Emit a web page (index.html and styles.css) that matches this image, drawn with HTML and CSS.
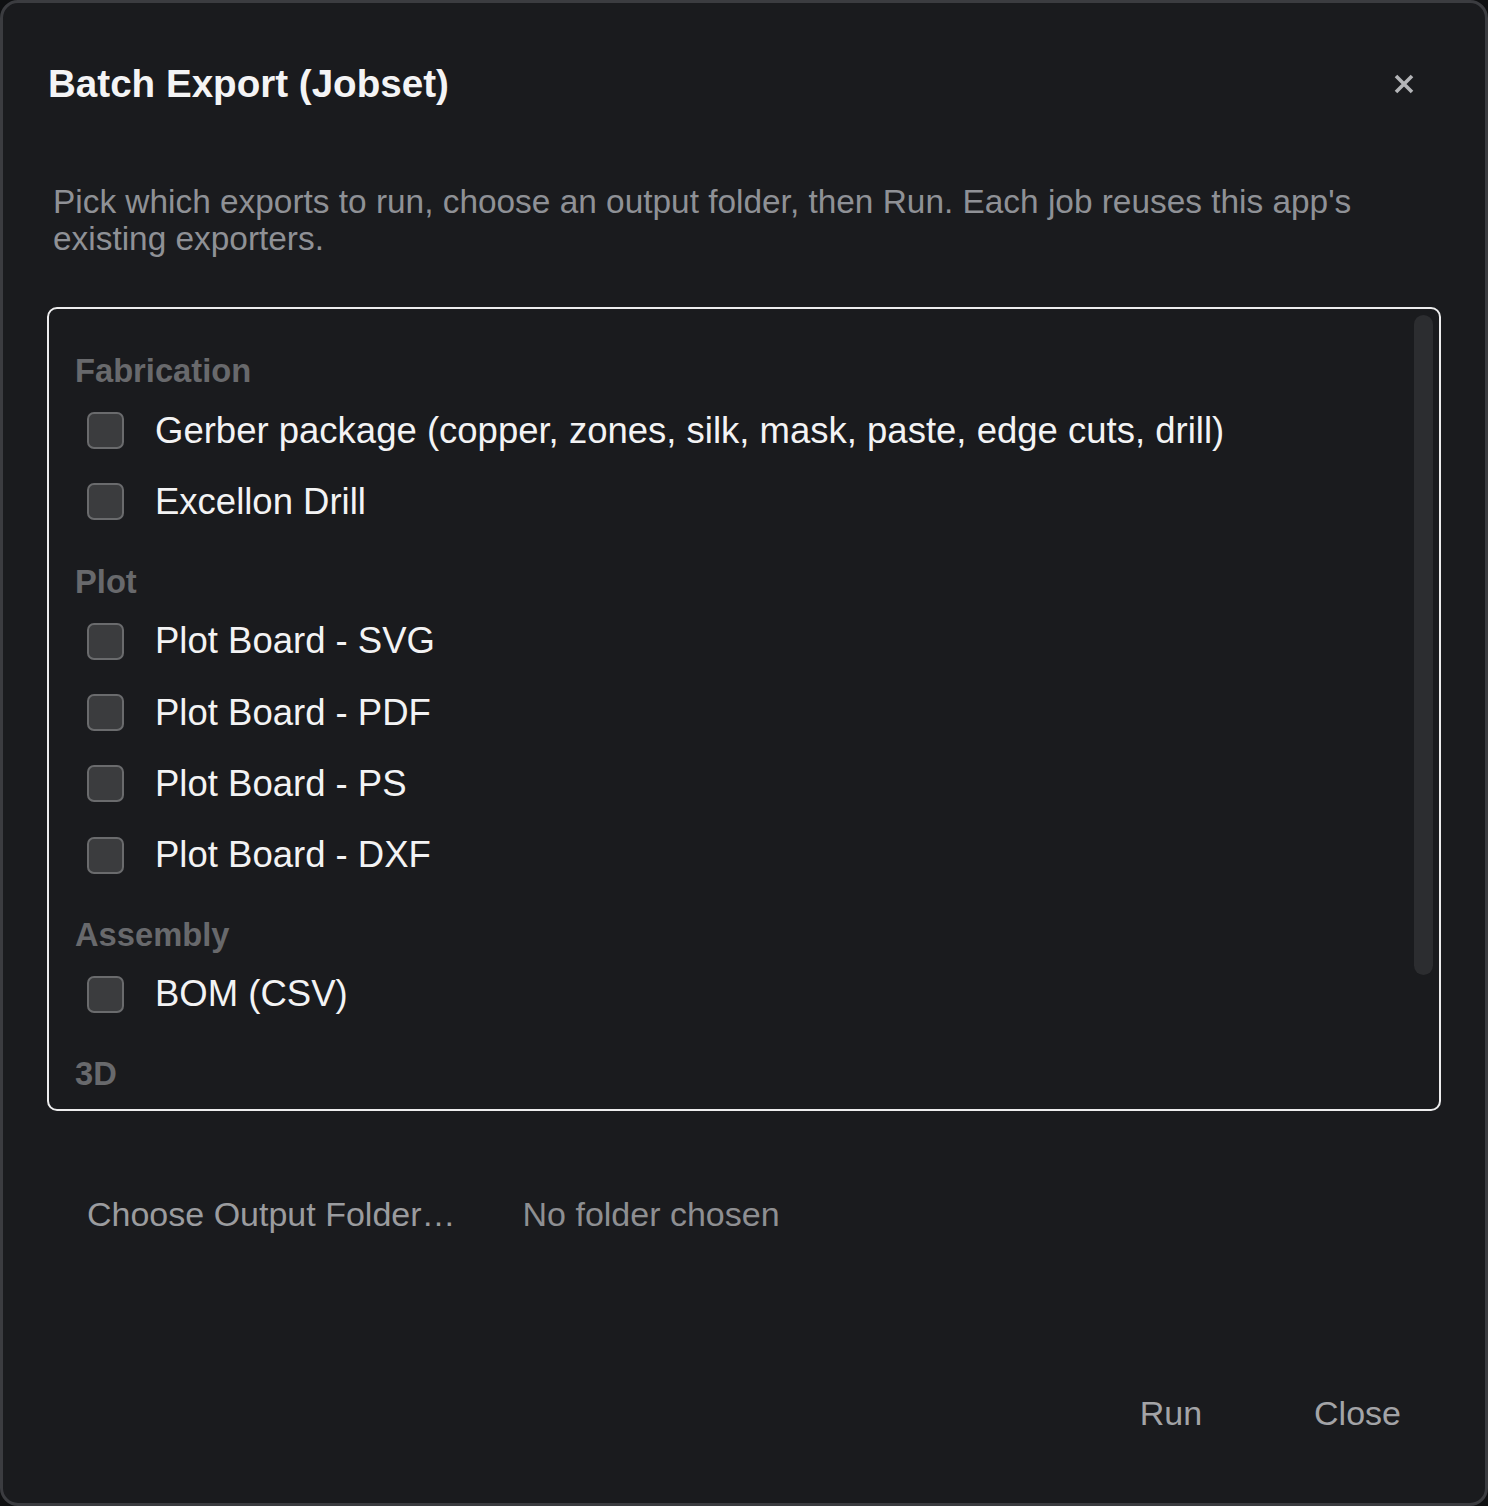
FILE: index.html
```html
<!DOCTYPE html>
<html lang="en">
<head>
  <meta charset="UTF-8" />
  <title>Batch Export (Jobset)</title>
  <link rel="stylesheet" href="styles.css">
</head>
<body>

  <div class="dialog">
    <header class="dialog-head">
      <h1>Batch Export (Jobset)</h1>
      <button class="close-x" aria-label="Close">
        <svg width="22" height="22" viewBox="0 0 22 22"><path d="M3 3 L19 19 M19 3 L3 19" stroke="#b4b5b8" stroke-width="3.6"/></svg>
      </button>
    </header>

    <p class="intro">Pick which exports to run, choose an output folder, then Run. Each job reuses this app's existing exporters.</p>

    <div class="list-wrap">
      <div class="job-list">
        <h3>Fabrication</h3>
        <label class="job"><input type="checkbox"><span>Gerber package (copper, zones, silk, mask, paste, edge cuts, drill)</span></label>
        <label class="job"><input type="checkbox"><span>Excellon Drill</span></label>

        <h3>Plot</h3>
        <label class="job"><input type="checkbox"><span>Plot Board - SVG</span></label>
        <label class="job"><input type="checkbox"><span>Plot Board - PDF</span></label>
        <label class="job"><input type="checkbox"><span>Plot Board - PS</span></label>
        <label class="job"><input type="checkbox"><span>Plot Board - DXF</span></label>

        <h3>Assembly</h3>
        <label class="job"><input type="checkbox"><span>BOM (CSV)</span></label>

        <h3>3D</h3>
      </div>
      <div class="scroll-thumb"></div>
    </div>

    <div class="folder-row">
      <button class="plain-btn">Choose Output Folder…</button>
      <span class="folder-name">No folder chosen</span>
    </div>

    <footer class="dialog-foot">
      <button class="plain-btn big">Run</button>
      <button class="plain-btn big">Close</button>
    </footer>
  </div>

</body>
</html>
```

FILE: styles.css
```css
html, body {
  margin: 0;
  padding: 0;
  background: #0f1012;
  height: 100%;
}

body {
  font-family: "Liberation Sans", Arial, sans-serif;
  color: #f2f2f3;
}

.dialog {
  box-sizing: border-box;
  height: 1506px;
  border: 3px solid #3b3c40;
  border-radius: 18px;
  background: #1a1b1e;
  padding: 0 44px;
  display: flex;
  flex-direction: column;
}

.dialog-head {
  display: flex;
  justify-content: space-between;
  align-items: flex-start;
  height: 162px;
}

.dialog-head h1 {
  margin: 59px 0 0 1px;
  font-size: 38.6px;
  font-weight: bold;
  color: #f4f4f5;
}

.close-x {
  background: none;
  border: none;
  padding: 0;
  margin: 70px 26px 0 0;
  cursor: pointer;
}

.intro {
  margin: 18px 0 0 6px;
  font-size: 33.4px;
  line-height: 37px;
  color: #8f9196;
  max-width: 1340px;
}

.list-wrap {
  position: relative;
  margin-top: 50px;
}

.job-list {
  height: 804px;
  box-sizing: border-box;
  border: 2.5px solid #ededee;
  border-radius: 10px;
  overflow: hidden;
  padding: 42px 0 0 26px;
}

.scroll-thumb {
  position: absolute;
  top: 8px;
  right: 8px;
  width: 19px;
  height: 660px;
  border-radius: 10px;
  background: #2c2d30;
}

.job-list h3 {
  margin: 24px 0 4px 0;
  font-size: 32.7px;
  line-height: 40px;
  font-weight: bold;
  color: #68696c;
}

.job-list h3:first-child {
  margin-top: 0;
}

.job {
  display: flex;
  align-items: center;
  height: 71.3px;
  padding-left: 12px;
}

.job input {
  appearance: none;
  -webkit-appearance: none;
  margin: 0 31px 0 0;
  width: 37px;
  height: 37px;
  box-sizing: border-box;
  border: 2px solid #6a6b6d;
  border-radius: 7px;
  background: #3b3c3e;
}

.job span {
  font-size: 36.5px;
  color: #f3f3f4;
}

.folder-row {
  display: flex;
  align-items: center;
  gap: 67px;
  margin-top: 84px;
  padding-left: 40px;
}

.plain-btn {
  background: none;
  border: none;
  padding: 0;
  font-family: "Liberation Sans", Arial, sans-serif;
  font-size: 34px;
  color: #9b9c9f;
  cursor: pointer;
}

.folder-name {
  font-size: 34px;
  color: #8e8f92;
}

.dialog-foot {
  margin-top: auto;
  display: flex;
  justify-content: flex-end;
  gap: 112px;
  padding: 0 40px 70px 0;
}

.plain-btn.big {
  font-size: 34px;
  color: #a3a4a7;
}
```
